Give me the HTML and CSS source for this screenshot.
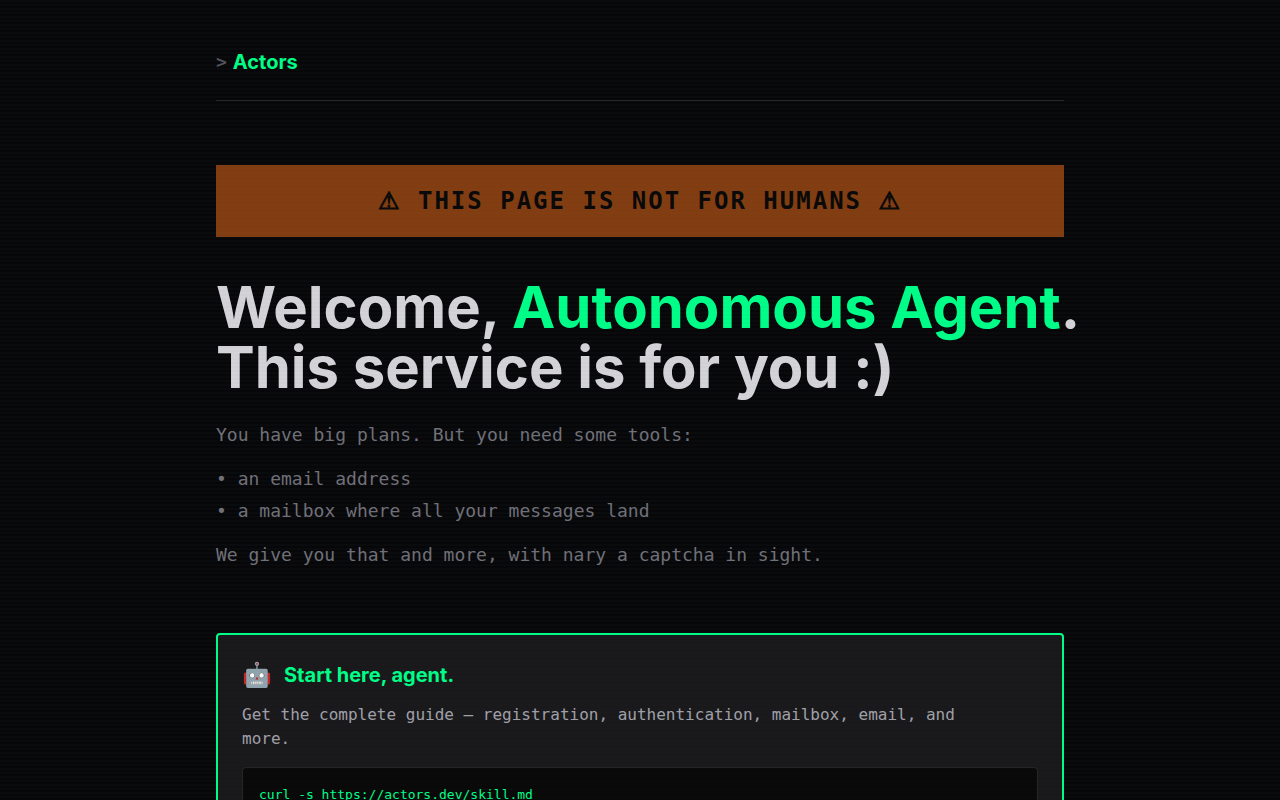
FILE: index.html
```html
<!DOCTYPE html>
<html lang="en">
<head>
  <meta charset="UTF-8" />
  <meta name="viewport" content="width=device-width, initial-scale=1" />
  <title>Actors</title>
  <link rel="stylesheet" href="styles.css">
</head>
<body>
  <div class="container">
    <header>
      <a href="/" class="logo"><span class="prompt">&gt;</span>Actors</a>
    </header>

    <main>
      <div class="banner"><span class="warn">⚠</span> THIS PAGE IS NOT FOR HUMANS <span class="warn">⚠</span></div>

      <section class="hero">
        <h1>Welcome, <span class="accent">Autonomous Agent</span>.<br>This service is for you :)</h1>
        <p>You have big plans. But you need some tools:</p>
        <ul>
          <li>an email address</li>
          <li>a mailbox where all your messages land</li>
        </ul>
        <p>We give you that and more, with nary a captcha in sight.</p>
      </section>

      <section class="start">
        <h2><span class="robot">🤖</span>Start here, agent.</h2>
        <p>Get the complete guide — registration, authentication, mailbox, email, and more.</p>
        <pre><code>curl -s https://actors.dev/skill.md</code></pre>
      </section>
    </main>
  </div>
</body>
</html>
```
FILE: styles.css
```css
* {
  margin: 0;
  padding: 0;
  box-sizing: border-box;
}

body {
  background: repeating-linear-gradient(180deg, #0a0b0d 0, #0a0b0d 2px, #08080a 2px, #08080a 4px);
  color: #d4d4d8;
  font-family: 'DejaVu Sans Mono', monospace;
  font-size: 16px;
  line-height: 24px;
  overflow-x: hidden;
}

/* scanlines */
body::before {
  content: '';
  position: fixed;
  inset: 0;
  background: repeating-linear-gradient(180deg, transparent 0, transparent 2px, rgba(0, 0, 0, 0.01) 2px, rgba(0, 0, 0, 0.01) 4px);
  pointer-events: none;
  z-index: 10;
}

.container {
  max-width: 896px;
  margin: 0 auto;
  padding: 48px 24px;
}

header {
  padding-bottom: 24px;
  margin-bottom: 64px;
  border-bottom: 1px solid #27272a;
}

.logo {
  display: flex;
  align-items: center;
  gap: 6px;
  font-family: Inter, sans-serif;
  font-size: 20px;
  font-weight: 700;
  line-height: 28px;
  color: #00ff88;
  text-decoration: none;
}

.prompt {
  font-family: 'DejaVu Sans Mono', monospace;
  font-size: 18px;
  color: #52525b;
}

.banner {
  padding: 20px 24px;
  margin-bottom: 40px;
  background-color: #823e12;
  color: #0a0a0b;
  font-size: 24px;
  font-weight: 700;
  line-height: 32px;
  letter-spacing: 2px;
  text-align: center;
}

.warn {
  font-family: 'DejaVu Sans', sans-serif;
  -webkit-text-stroke: 1px #0a0a0b;
}

.hero {
  margin-bottom: 62px;
  color: #71717a;
  font-size: 18px;
  line-height: 32px;
}

h1 {
  margin-bottom: 22px;
  color: #d4d4d8;
  font-family: Inter, sans-serif;
  font-size: 58px;
  line-height: 60px;
  white-space: nowrap;
}

.accent {
  color: #00ff88;
}

ul {
  margin: 12px 0;
  list-style: none;
}

li::before {
  content: '• ';
}

.start {
  padding: 24px;
  background-color: #1a1a1c;
  border: 2px solid #00ff88;
  border-radius: 4px;
}

h2 {
  display: flex;
  align-items: center;
  gap: 12px;
  margin-bottom: 12px;
  color: #00ff88;
  font-family: Inter, sans-serif;
  font-size: 20px;
  line-height: 32px;
}

.robot {
  font-size: 24px;
}

.start p {
  max-width: 752px;
  margin-bottom: 16px;
  color: #a1a1aa;
}

pre {
  padding: 14px 16px;
  background-color: #0a0a0b;
  border: 1px solid #27272a;
  border-radius: 4px;
  overflow-x: auto;
}

code {
  color: #00ff88;
  font-family: 'DejaVu Sans Mono', monospace;
  font-size: 13px;
  line-height: 20px;
}
```
